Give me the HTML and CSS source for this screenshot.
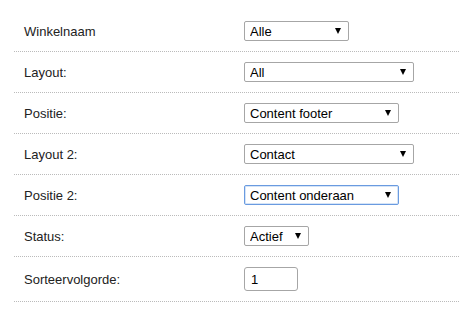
FILE: index.html
```html
<!DOCTYPE html>
<html lang="nl">
<head>
    <meta charset="UTF-8">
    <meta name="viewport" content="width=device-width, initial-scale=1.0">
    <title>Instellingen</title>
    <link rel="stylesheet" href="styles.css">
</head>
<body>
    <form class="settings">
        <div class="row">
            <label for="shop">Winkelnaam</label>
            <select id="shop" class="select w-shop"><option>Alle</option></select>
        </div>
        <div class="row">
            <label for="layout">Layout:</label>
            <select id="layout" class="select w-wide"><option>All</option></select>
        </div>
        <div class="row">
            <label for="position">Positie:</label>
            <select id="position" class="select w-mid"><option>Content footer</option></select>
        </div>
        <div class="row">
            <label for="layout2">Layout 2:</label>
            <select id="layout2" class="select w-wide"><option>Contact</option></select>
        </div>
        <div class="row">
            <label for="position2">Positie 2:</label>
            <select id="position2" class="select w-mid focused"><option>Content onderaan</option></select>
        </div>
        <div class="row">
            <label for="status">Status:</label>
            <select id="status" class="select w-small"><option>Actief</option></select>
        </div>
        <div class="row">
            <label for="sort">Sorteervolgorde:</label>
            <input type="text" id="sort" class="text-input" value="1">
        </div>
    </form>
</body>
</html>
```

FILE: styles.css
```css
body {
    margin: 0;
    padding: 11px 0 0 14px;
    font-family: "Liberation Sans", Arial, sans-serif;
    font-size: 13px;
    color: #222;
    background: #fff;
}

.settings {
    margin: 0;
}

.row {
    display: flex;
    align-items: center;
    padding: 10px 0 10px 10px;
    border-bottom: 1px dotted #bbb;
}

.row label {
    width: 220px;
    flex-shrink: 0;
}

.select {
    -webkit-appearance: none;
    appearance: none;
    box-sizing: border-box;
    height: 20px;
    margin: 0;
    padding: 0 20px 0 5px;
    font-family: inherit;
    font-size: 13px;
    color: #000;
    border: 1px solid #a6a6a6;
    border-radius: 2px;
    background: #fff url("data:image/svg+xml;utf8,<svg xmlns='http://www.w3.org/2000/svg' width='6' height='6'><path d='M0 0h6L3 6z' fill='black'/></svg>") no-repeat right 7px center;
}

.select.focused {
    border-color: #6a9be0;
    box-shadow: 0 0 0 1px #d5e4f7 inset;
    outline: none;
}

.w-shop { width: 105px; }
.w-wide { width: 170px; }
.w-mid { width: 155px; }
.w-small { width: 65px; }

.text-input {
    box-sizing: border-box;
    width: 54px;
    height: 24px;
    margin: 0;
    padding: 0 6px;
    font-family: inherit;
    font-size: 13px;
    color: #000;
    border: 1px solid #a6a6a6;
    border-radius: 3px;
}
```
